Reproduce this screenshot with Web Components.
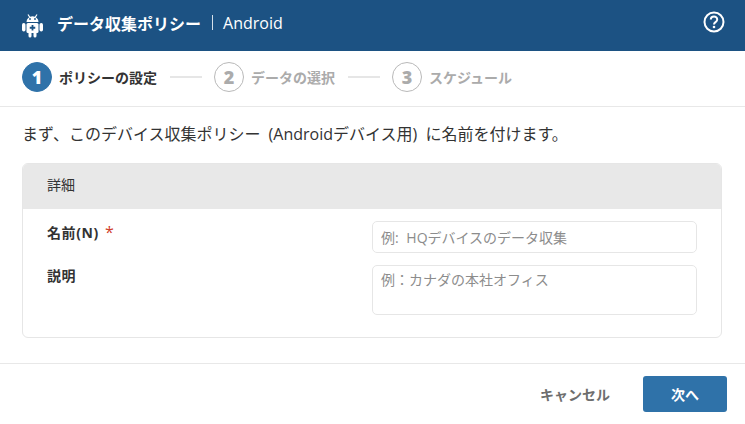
<!DOCTYPE html>
<html lang="ja">
<head>
<meta charset="utf-8">
<title>データ収集ポリシー</title>
<style>
  html, body { margin: 0; padding: 0; background: #fff; }
  body {
    width: 745px;
    height: 424px;
    overflow: hidden;
    font-family: "Open Sans", "Noto Sans CJK JP", sans-serif;
    color: #333;
  }
</style>
</head>
<body>
<policy-dialog>
  <dialog-header slot="header" title-text="データ収集ポリシー" platform="Android"></dialog-header>
  <step-bar slot="steps">
    <step-item num="1" active>ポリシーの設定</step-item>
    <step-item num="2">データの選択</step-item>
    <step-item num="3">スケジュール</step-item>
  </step-bar>
  <p slot="intro">まず、このデバイス収集ポリシー (Androidデバイス用) に名前を付けます。</p>
  <detail-card slot="card" heading="詳細">
    <form-row label="名前(N)" required placeholder="例: HQデバイスのデータ収集"></form-row>
    <form-row label="説明" multiline placeholder="例：カナダの本社オフィス"></form-row>
  </detail-card>
  <dialog-footer slot="footer"></dialog-footer>
</policy-dialog>

<script>
class PolicyDialog extends HTMLElement {
  constructor() {
    super();
    this.attachShadow({ mode: 'open' });
    this.shadowRoot.innerHTML = `
      <style>
        :host { display: flex; flex-direction: column; width: 745px; height: 424px; }
        .intro { padding: 17px 22px 0; height: 40px; font-size: 16px; line-height: 20px; word-spacing: 4px; }
        ::slotted(p) { margin: 0; }
        .card { padding: 0 23px 0 22px; }
      </style>
      <slot name="header"></slot>
      <slot name="steps"></slot>
      <div class="intro"><slot name="intro"></slot></div>
      <div class="card"><slot name="card"></slot></div>
      <slot name="footer"></slot>
    `;
  }
}

class DialogHeader extends HTMLElement {
  constructor() {
    super();
    this.attachShadow({ mode: 'open' });
    this.shadowRoot.innerHTML = `
      <style>
        :host { display: flex; align-items: center; height: 51px; padding: 0 20px 5px 20px; box-sizing: border-box; background: #1c5283; color: #fff; }
        svg { display: block; flex: none; }
        .robot { margin-right: 12px; margin-top: 5px; }
        .title { font-size: 16px; font-weight: 700; }
        .sep { width: 1px; height: 15px; margin: 0 10px 0 11px; background: #d5e0ea; }
        .platform { font-size: 16px; flex: 1; }
        .help { margin-top: -2px; }
      </style>
      <svg class="robot" width="25" height="25" viewBox="0 0 25 25">
        <path d="M8 1.500l1.800 2.800M17 1.500l-1.800 2.800" stroke="#fff" stroke-width="1.200"/>
        <path fill="#fff" d="M6.500 9a6 5.800 0 0 1 12 0z"/>
        <circle cx="10" cy="6" r=".9" fill="#1c5283"/><circle cx="15" cy="6" r=".9" fill="#1c5283"/>
        <rect x="6.500" y="10" width="12" height="10" rx="1.500" fill="#fff"/>
        <rect x="2" y="10" width="3.500" height="8.500" rx="1.700" fill="#fff"/>
        <rect x="19.500" y="10" width="3.500" height="8.500" rx="1.700" fill="#fff"/>
        <rect x="8.500" y="19" width="3" height="5.500" rx="1.500" fill="#fff"/>
        <rect x="13.500" y="19" width="3" height="5.500" rx="1.500" fill="#fff"/>
        <path d="M12.500 12v5.500M9.750 14.750h5.500" stroke="#1c5283" stroke-width="1.800"/>
      </svg>
      <span class="title">${this.getAttribute('title-text')}</span>
      <span class="sep"></span>
      <span class="platform">${this.getAttribute('platform')}</span>
      <svg class="help" width="22" height="22" viewBox="0 0 22 22" fill="none" stroke="#fff">
        <circle cx="11" cy="11" r="9.500" stroke-width="2"/>
        <path d="M7.800 8.600c0-4.200 6.400-4.200 6.400-.1 0 2.600-3.200 2.600-3.200 4.900" stroke-width="2"/>
        <circle cx="11" cy="16" r="1.300" fill="#fff" stroke="none"/>
      </svg>
    `;
  }
}

class StepBar extends HTMLElement {
  constructor() {
    super();
    this.attachShadow({ mode: 'open' });
    this.shadowRoot.innerHTML = `
      <style>
        :host { display: flex; align-items: center; height: 56px; padding: 0 0 2px 22px; box-sizing: border-box; border-bottom: 1px solid #e8e8e8; }
      </style>
      <slot></slot>
    `;
  }
}

class StepItem extends HTMLElement {
  constructor() {
    super();
    this.attachShadow({ mode: 'open' });
    this.shadowRoot.innerHTML = `
      <style>
        :host { display: flex; align-items: center; font-size: 14px; font-weight: 700; color: #ababab; }
        :host([active]) { color: #333; }
        .num { display: flex; align-items: center; justify-content: center; width: 30px; height: 30px; margin-right: 7px; box-sizing: border-box; border: 1.500px solid #b9b9b9; border-radius: 50%; font-size: 18px; font-weight: 800; }
        :host([active]) .num { background: #2f72a9; border-color: #2f72a9; color: #fff; }
        .label { margin-top: -1px; }
        .line { width: 32px; height: 2px; margin: 0 12px 0 13px; background: #e6e6e6; }
        :host(:last-child) .line { display: none; }
      </style>
      <span class="num">${this.getAttribute('num')}</span>
      <span class="label"><slot></slot></span>
      <span class="line"></span>
    `;
  }
}

class DetailCard extends HTMLElement {
  constructor() {
    super();
    this.attachShadow({ mode: 'open' });
    this.shadowRoot.innerHTML = `
      <style>
        :host { display: block; height: 175px; box-sizing: border-box; border: 1px solid #e6e6e6; border-radius: 6px; overflow: hidden; }
        .head { height: 45px; padding-left: 24px; background: #e8e8e8; font-size: 14px; line-height: 42px; }
        .body { display: flex; flex-direction: column; gap: 12px; padding-top: 12px; }
      </style>
      <div class="head">${this.getAttribute('heading')}</div>
      <div class="body"><slot></slot></div>
    `;
  }
}

class FormRow extends HTMLElement {
  constructor() {
    super();
    this.attachShadow({ mode: 'open' });
    const placeholder = this.getAttribute('placeholder');
    const field = this.hasAttribute('multiline')
      ? `<textarea placeholder="${placeholder}"></textarea>`
      : `<input type="text" placeholder="${placeholder}">`;
    this.shadowRoot.innerHTML = `
      <style>
        :host { display: grid; grid-template-columns: 349px 325px; }
        label { padding: 2px 0 0 24px; font-size: 14px; font-weight: 700; line-height: 18px; letter-spacing: .6px; }
        .req { margin-left: 6px; color: #d0402b; font-size: 16px; font-weight: 400; }
        input, textarea { display: block; width: 100%; box-sizing: border-box; margin: 0; padding: 1px 8px 0; border: 1px solid #e6e6e6; border-radius: 5px; outline: 0; resize: none; font: 14px "Open Sans", "Noto Sans CJK JP", sans-serif; word-spacing: 4px; color: #333; }
        input { height: 32px; }
        textarea { height: 50px; padding-top: 3px; }
        ::placeholder { color: #8c8c8c; opacity: 1; }
      </style>
      <label>${this.getAttribute('label')}${this.hasAttribute('required') ? '<span class="req">*</span>' : ''}</label>
      ${field}
    `;
  }
}

class DialogFooter extends HTMLElement {
  constructor() {
    super();
    this.attachShadow({ mode: 'open' });
    this.shadowRoot.innerHTML = `
      <style>
        :host { display: flex; align-items: center; justify-content: flex-end; gap: 33px; height: 61px; margin-top: 25px; padding-right: 18px; box-sizing: border-box; border-top: 1px solid #e8e8e8; }
        button { height: 36px; margin: 0; padding: 0; border: 0; background: none; font: 700 14px "Open Sans", "Noto Sans CJK JP", sans-serif; color: #6e6e6e; }
        .next { width: 84px; border-radius: 3px; background: #2f72a9; color: #fff; }
      </style>
      <button type="button">キャンセル</button>
      <button class="next" type="button">次へ</button>
    `;
  }
}

customElements.define('policy-dialog', PolicyDialog);
customElements.define('dialog-header', DialogHeader);
customElements.define('step-bar', StepBar);
customElements.define('step-item', StepItem);
customElements.define('detail-card', DetailCard);
customElements.define('form-row', FormRow);
customElements.define('dialog-footer', DialogFooter);
</script>
</body>
</html>
